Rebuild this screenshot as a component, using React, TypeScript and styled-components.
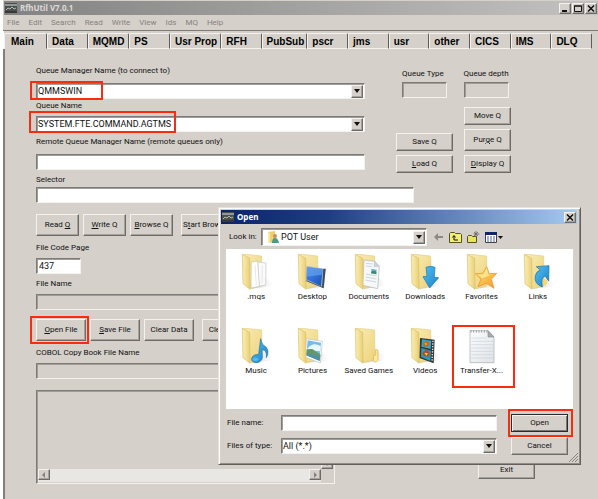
import React from "react";
import styled, { createGlobalStyle, css } from "styled-components";

const face = "#d5d0ca";
const shade = "#7c7b78";
const light = "#f4f2ee";
const red = "#fb2b0e";

const GlobalStyle = createGlobalStyle`
  * { box-sizing: border-box; }
  body {
    margin: 0;
    background: #fff;
    color: #111;
    font-family: Roboto, Arial, sans-serif;
    font-size: 8px;
    line-height: 14px;
  }
  button, input, select, textarea {
    margin: 0;
    padding: 0;
    border: 0;
    border-radius: 0;
    outline: 0;
    color: inherit;
    font: inherit;
  }
`;

const raised = css`
  border: 1px solid;
  border-color: ${light} #6d6b68 #6d6b68 ${light};
  box-shadow: inset -1px -1px 0 #a5a19c;
`;

const sunken = css`
  border: 1px solid;
  border-color: ${shade} ${light} ${light} ${shade};
  box-shadow: inset 1px 1px 0 #a09d99;
`;

const Desktop = styled.div`
  position: relative;
  min-height: 100vh;
  padding-left: 3px;
  display: flex;
  overflow: hidden;
`;

const MainWindow = styled.main`
  flex: 1;
  min-width: 0;
  display: flex;
  flex-direction: column;
  background: ${face};
`;

const TitleBar = styled.header<{ $active?: boolean }>`
  display: flex;
  align-items: center;
  gap: 3px;
  height: 14px;
  flex: none;
  padding: 0 1px;
  color: ${(p) => (p.$active ? "#fff" : "#dcdad6")};
  background: ${(p) =>
    p.$active
      ? "linear-gradient(90deg, #0a246a, #1d3f82 30%, #a6caf0)"
      : "linear-gradient(90deg, #828282, #c3c2c0)"};
  margin: ${(p) => (p.$active ? "0" : "1px 0 0 1px")};
`;

const Title = styled.h1`
  margin: 0;
  flex: 1;
  font: bold 8px/14px "Noto Sans", sans-serif;
`;

const WindowControls = styled.div`
  display: flex;
  gap: 1px;
`;

const ControlButton = styled.button`
  ${raised}
  width: 12px;
  height: 11px;
  display: grid;
  place-items: center;
  background: ${face};
  color: #111;
`;

const MenuBar = styled.nav`
  display: flex;
  gap: 9px;
  height: 16px;
  padding-left: 4px;
  border-bottom: 1px solid ${shade};
`;

const MenuItem = styled.button`
  background: none;
  color: #85827e;
`;

const TabBar = styled.div`
  display: flex;
  height: 18px;
  padding: 2px 6px 0 0;
  border-left: 1px solid #fff;
`;

const Tab = styled.button<{ $weight: number; $selected: boolean }>`
  flex: ${(p) => p.$weight} 1 0;
  min-width: 0;
  padding-left: ${(p) => (p.$selected ? "6px" : "4px")};
  text-align: left;
  white-space: nowrap;
  color: #000;
  background: ${face};
  font: bold 10px/15px "Liberation Sans", Arial, sans-serif;
  border-top: 1px solid ${light};
  border-right: 1px solid #5f5d5a;
  border-left: 1px solid ${light};
  border-bottom: 1px solid ${(p) => (p.$selected ? face : light)};
  border-radius: 2px 2px 0 0;
`;

const Page = styled.section`
  flex: 1;
  padding: 15px 87px 15px 31px;
  border-left: 2px solid #82807d;
`;

const TopRow = styled.div`
  display: flex;
  gap: 31px;
`;

const Fields = styled.div`
  flex: 1;
  min-width: 0;
  display: flex;
  flex-direction: column;
  padding-bottom: 3px;
`;

const Field = styled.div<{ $gap?: number; $top?: number; $width?: string }>`
  position: relative;
  display: flex;
  flex-direction: column;
  gap: ${(p) => p.$gap ?? 3}px;
  margin-top: ${(p) => p.$top ?? 0}px;
  width: ${(p) => p.$width ?? "auto"};
  white-space: nowrap;
`;

const TextBox = styled.input`
  ${sunken}
  width: 100%;
  height: 16px;
  padding: 0 2px;
  background: #fff;
  font-size: 9px;
  &:disabled { background: ${face}; }
`;

const ComboFrame = styled.div`
  ${sunken}
  position: relative;
  display: flex;
  align-items: center;
  height: 16px;
  padding: 1px;
  background: #fff;
`;

const ComboSelect = styled.select`
  appearance: none;
  flex: 1;
  min-width: 0;
  height: 12px;
  font-size: 9px;
  line-height: 12px;
  background: transparent;
`;

const ComboArrow = styled.span`
  ${raised}
  width: 12px;
  height: 13px;
  display: grid;
  place-items: center;
  background: ${face};
  pointer-events: none;
`;

const Highlight = styled.span<{ $inset: string; $width?: string }>`
  position: absolute;
  inset: ${(p) => p.$inset};
  width: ${(p) => p.$width ?? "auto"};
  border: 2px solid ${red};
  pointer-events: none;
`;

const QueueActions = styled.div`
  display: flex;
  gap: 8px;
  padding-top: 3px;
`;

const ActionColumn = styled.div`
  display: flex;
  flex-direction: column;
  justify-content: space-between;
  width: 57px;
`;

const StatusColumn = styled.div`
  display: flex;
  flex-direction: column;
  justify-content: space-between;
  width: 50px;
`;

const Status = styled.div`
  align-self: center;
  width: 45px;
  display: flex;
  flex-direction: column;
  gap: 1px;
  white-space: nowrap;
`;

const Stack = styled.div`
  display: flex;
  flex-direction: column;
  gap: 4px;
`;

const Button = styled.button<{ $width?: string; $height?: number; $default?: boolean }>`
  ${raised}
  flex: none;
  width: ${(p) => p.$width ?? "100%"};
  height: ${(p) => p.$height ?? 18}px;
  background: ${face};
  white-space: nowrap;
  text-align: center;
  u { text-underline-offset: 1px; }
  ${(p) =>
    p.$default &&
    css`
      border-color: #2b2b2b;
      box-shadow: inset 1px 1px 0 ${light}, inset -1px -1px 0 #777;
    `}
`;

const StatusButtons = styled(Stack)`
  padding-left: 3px;
`;

const ButtonRow = styled.div<{ $top: number }>`
  display: flex;
  gap: 4px;
  margin-top: ${(p) => p.$top}px;
`;

const ButtonSlot = styled.span<{ $indent?: number }>`
  position: relative;
  display: flex;
  margin-left: ${(p) => p.$indent ?? 0}px;
`;

const BottomRow = styled.div`
  display: flex;
  align-items: flex-end;
  justify-content: space-between;
  margin: 11px -24px 0 0;
`;

const CopyBook = styled.div`
  ${sunken}
  display: grid;
  grid-template: 1fr 13px / 1fr 12px;
  width: 299px;
  height: 94px;
  padding: 1px;
`;

const CopyBookText = styled.textarea`
  width: 100%;
  height: 100%;
  resize: none;
  background: transparent;
`;

const Scroll = styled.div<{ $vertical?: boolean }>`
  display: flex;
  flex-direction: ${(p) => (p.$vertical ? "column" : "row")};
  justify-content: space-between;
  background: #e9e7e3;
`;

const ExitSlot = styled.div`
  width: 57px;
  margin-bottom: 5px;
`;

const Dialog = styled.section`
  position: absolute;
  left: 218px;
  top: 207px;
  width: 363px;
  padding: 2px 3px 9px 2px;
  background: ${face};
  border: 1px solid;
  border-color: #e6e2dd #62605d #62605d #e6e2dd;
  box-shadow: inset 1px 1px 0 #fff, inset -1px -1px 0 #908d89;
  white-space: nowrap;
`;

const LookIn = styled.div`
  display: grid;
  grid-template-columns: 32px 166px auto;
  align-items: center;
  padding: 4px 8px 3px;
`;

const LocationFrame = styled(ComboFrame)`
  height: 18px;
  padding-left: 5px;
  gap: 2px;
`;

const ToolBar = styled.div`
  display: flex;
  align-items: center;
  gap: 5px;
  padding-left: 6px;
`;

const ToolButton = styled.button`
  display: flex;
  background: none;
`;

const FileList = styled.div`
  display: grid;
  grid-template-columns: repeat(6, 1fr);
  grid-auto-rows: 74px;
  height: 160px;
  margin: 0 4px 0 5px;
  padding: 5px 7px 0 2px;
  background: #fff;
`;

const FileItem = styled.button`
  position: relative;
  display: flex;
  flex-direction: column;
  align-items: center;
  background: none;
  white-space: nowrap;
`;

const DialogFooter = styled.div`
  display: grid;
  grid-template-columns: 54px 1fr 57px;
  align-items: center;
  row-gap: 5px;
  padding: 5px 9px 0 6px;
`;

const FooterControl = styled.div`
  margin-right: 14px;
`;

const Grip = styled.svg`
  position: absolute;
  right: 2px;
  bottom: 2px;
`;

function Arrow({ dir = "down", muted = false }: { dir?: "down" | "left" | "right"; muted?: boolean }) {
  const paths = { down: "M0 1h6L3 5z", left: "M4 0v6L1 3z", right: "M2 0v6l3-3z" };
  return (
    <svg width="6" height="6" viewBox="0 0 6 6" aria-hidden="true">
      <path d={paths[dir]} fill={muted ? "#858380" : "#111"} />
    </svg>
  );
}

function AppIcon() {
  return (
    <svg width="12" height="10" viewBox="0 0 12 10" aria-hidden="true">
      <rect width="12" height="10" fill="#4b504f" />
      <path d="M0 1h12v2H0z" fill="#8e9894" />
      <path d="M1 7l2-2 2 1 2-2 2 2 2-1" fill="none" stroke="#b4b8b3" />
      <path d="M0 9h12" stroke="#222" />
    </svg>
  );
}

function CloseGlyph() {
  return (
    <svg width="8" height="7" viewBox="0 0 8 7" aria-hidden="true">
      <path d="M1 0.5l6 6M7 0.5l-6 6" stroke="#111" strokeWidth="1.5" />
    </svg>
  );
}

function Combo({ id, value }: { id: string; value: string }) {
  return (
    <ComboFrame>
      <ComboSelect id={id}>
        <option>{value}</option>
      </ComboSelect>
      <ComboArrow><Arrow /></ComboArrow>
    </ComboFrame>
  );
}

type Kind =
  | "papers" | "desktop" | "document" | "download" | "star" | "link"
  | "music" | "picture" | "games" | "video" | "text";

const overlays: Record<Exclude<Kind, "text">, React.ReactNode> = {
  papers: (
    <g stroke="#c4c4c4" strokeWidth="2">
      <path d="M50 24l25 3-1 66-20 4z" fill="#fafafa" />
      <path d="M31 24l19-2 5 75-25 5z" fill="#fff" />
      <path d="M42 32l4 62M64 34l-1 54" stroke="#ddd" />
    </g>
  ),
  desktop: (
    <>
      <path d="M28 36l58 8-6 59-56-24z" fill="#aab8c5" />
      <path d="M31 39l46 7-5 50-44-20z" fill="url(#screen)" />
      <path d="M31 39l46 7-2 16-46 6z" fill="#6ea6f4" opacity=".6" />
      <path d="M79 45l7-1-6 59-5-3z" fill="#3e4a55" />
      <path d="M25 79l54 22" stroke="#4c5c68" strokeWidth="3" />
    </>
  ),
  document: (
    <>
      <path d="M30 18l32 4 14 15-5 67-45-10z" fill="#f6f8fa" stroke="#aeb6bb" strokeWidth="2" />
      <path d="M62 22l-2 16 16-1z" fill="#cdd8de" stroke="#9aa5ab" />
      <path d="M36 28l20 2M36 36l18 2M36 60l32 6M35 69l32 6M34 78l32 6" stroke="#b9c3ca" strokeWidth="2" />
      <path d="M52 44l16 3-1 14-16-3z" fill="#76b4da" />
      <path d="M52 54q8-8 15 0l0 7-16-3z" fill="#3e8b6d" />
    </>
  ),
  download: (
    <path d="M48 40q13-6 27 0l-2 30 13 1-27 31-20-34 12-1z" fill="url(#blue)" stroke="#1478b5" strokeWidth="2" />
  ),
  star: (
    <>
      <path d="M62 38l8 21 22-1-16 18 8 27-23-15-25 10 9-23-17-16 22-1z" fill="url(#gold)" stroke="#e78e21" strokeWidth="2" />
      <path d="M62 43l6 20 14-2-34 12-12-11 16-1z" fill="#fff1a4" opacity=".7" />
    </>
  ),
  link: (
    <>
      <path d="M40 38l38-3-1 46-11-15q-13 5-8 33-26-10-21-34 3-13 15-17z" fill="url(#blue)" stroke="#126ca5" strokeWidth="2" />
      <path d="M64 76q9-2 9 7t-10 13z" fill="#f6d76c" />
    </>
  ),
  music: (
    <>
      <path d="M59 32q3 19 16 25 11 14 1 32 3-23-13-24l1 24q-4 15-19 15-15-2-13-13 4-13 21-11z" fill="url(#blue)" stroke="#1670ad" strokeWidth="2" />
      <ellipse cx="44" cy="94" rx="9" ry="5" fill="#7bc9f2" opacity=".6" />
    </>
  ),
  picture: (
    <>
      <path d="M28 32l48 8-6 65-47-18z" fill="#fff" stroke="#b6c1c8" strokeWidth="2" />
      <path d="M32 37l40 7-5 54-39-16z" fill="#74bde9" />
      <path d="M32 61q16-20 39-7l-1 16-41-4z" fill="#e9f7fb" />
      <path d="M29 64l17-1 25 17-3 18-40-16z" fill="#62986f" />
      <path d="M29 78l39 9-1 11-39-16z" fill="#4c91b5" />
    </>
  ),
  games: (
    <path d="M65 64l7 3v30l-6 6-8-4 1-16 6-2z" fill="#ffe89b" stroke="#dbb34a" strokeWidth="2" />
  ),
  video: (
    <>
      <path d="M30 30l44 5-3 71-43-16z" fill="#343434" />
      <path d="M36 34l28 4-2 25-28-7z" fill="#2baad1" />
      <path d="M34 60l29 8-2 31-28-12z" fill="#249bc0" />
      <path d="M38 46l10-8 11 6-3 11-14 1z" fill="#c26a23" />
      <path d="M37 76l11-12 11 9-3 14-15-3z" fill="#b34c27" />
      <path d="M43 45l8 2-3 5zM43 74l11 2-5 8z" fill="#f5ca35" />
      <path d="M69 38l-3 64" stroke="#eee" strokeWidth="4" strokeDasharray="4 4" />
    </>
  ),
};

const PaintDefs = styled.svg`
  position: absolute;
`;

function IconPaints() {
  return (
    <PaintDefs width="0" height="0" aria-hidden="true">
      <defs>
        <linearGradient id="back" x1="0" x2="1" y1="0" y2="1">
          <stop stopColor="#f9edb6" />
          <stop offset="1" stopColor="#ecd27a" />
        </linearGradient>
        <linearGradient id="flap" x1="0" x2="1">
          <stop stopColor="#fbefb8" />
          <stop offset="1" stopColor="#e9cf76" />
        </linearGradient>
        <linearGradient id="screen" x1="0" x2="1" y1="0" y2="1">
          <stop stopColor="#4a8ded" />
          <stop offset="1" stopColor="#1752ba" />
        </linearGradient>
        <linearGradient id="blue" x1="0" x2="1" y1="0" y2="1">
          <stop stopColor="#56bff0" />
          <stop offset="1" stopColor="#1683cb" />
        </linearGradient>
        <linearGradient id="gold" x1="0" x2="1" y1="0" y2="1">
          <stop stopColor="#ffe376" />
          <stop offset="1" stopColor="#f59b26" />
        </linearGradient>
        <linearGradient id="shadow" x1="0" x2="1">
          <stop stopColor="#999" stopOpacity=".6" />
          <stop offset="1" stopColor="#ccc" stopOpacity="0" />
        </linearGradient>
        <linearGradient id="sheet" x1="0" x2="1" y1="0" y2="1">
          <stop stopColor="#fdfdfd" />
          <stop offset="1" stopColor="#dfe3e7" />
        </linearGradient>
      </defs>
    </PaintDefs>
  );
}

function FileIcon({ kind }: { kind: Kind }) {
  if (kind === "text") {
    return (
      <svg width="34" height="36" viewBox="-3 0 102 108" aria-hidden="true">
        <path d="M15 8h54l18 19v77H15z" fill="url(#sheet)" stroke="#a6a9ac" strokeWidth="2" />
        <path d="M69 8v19h18z" fill="#a7acb1" stroke="#898d91" strokeWidth="2" />
        <path d="M19 30h46M19 40h65M19 50h65M19 60h65M19 70h65M19 80h65M19 90h65" stroke="#c7d2dc" strokeWidth="2" />
        <path d="M18 6v8M26 6v8M34 6v8M42 6v8M50 6v8M58 6v8M66 6v8" stroke="#9da0a3" strokeWidth="3" />
      </svg>
    );
  }
  return (
    <svg width="34" height="36" viewBox="-6 0 102 108" aria-hidden="true">
      <path d="M58 62l38 26-8 10-58 6z" fill="url(#shadow)" />
      <path d="M5 0l57 6 1 89-35 9z" fill="url(#back)" stroke="#e4cf81" strokeWidth="2" />
      {overlays[kind]}
      <path d="M4 1l22 12 1 93L6 89z" fill="url(#flap)" stroke="#dbbf62" strokeWidth="2" />
    </svg>
  );
}

const tabs: [string, number][] = [
  ["Main", 82], ["Data", 81], ["MQMD", 83], ["PS", 81], ["Usr Prop", 106], ["RFH", 80],
  ["PubSub", 93], ["pscr", 81], ["jms", 81], ["usr", 81], ["other", 81], ["CICS", 81], ["IMS", 81], ["DLQ", 81],
];

const files: [string, Kind][] = [
  [".mqs", "papers"], ["Desktop", "desktop"], ["Documents", "document"], ["Downloads", "download"],
  ["Favorites", "star"], ["Links", "link"], ["Music", "music"], ["Pictures", "picture"],
  ["Saved Games", "games"], ["Videos", "video"], ["Transfer-X...", "text"],
];

const menus = ["File", "Edit", "Search", "Read", "Write", "View", "Ids", "MQ", "Help"];

function OpenDialog() {
  return (
    <Dialog role="dialog" aria-label="Open">
      <TitleBar $active>
        <AppIcon />
        <Title as="h2">Open</Title>
        <ControlButton aria-label="Close"><CloseGlyph /></ControlButton>
      </TitleBar>
      <LookIn>
        <label htmlFor="look">Look in:</label>
        <LocationFrame>
          <svg width="12" height="13" viewBox="0 0 12 13" aria-hidden="true">
            <path d="M1 1l7-1v11l-5 1-2-1z" fill="#edcf6e" />
            <path d="M1 1l2 1v10l-2-1z" fill="#fae9a4" />
            <circle cx="8" cy="5" r="2" fill="#c88d62" />
            <path d="M5 12q0-5 3-5t4 5z" fill="#439d8a" />
          </svg>
          <ComboSelect id="look"><option>POT User</option></ComboSelect>
          <ComboArrow><Arrow /></ComboArrow>
        </LocationFrame>
        <ToolBar>
          <ToolButton aria-label="Back">
            <svg width="11" height="10" viewBox="0 0 11 10"><path d="M1 5l4-4v3h5v2H5v3z" fill="#8b8985" /></svg>
          </ToolButton>
          <ToolButton aria-label="Up one level">
            <svg width="13" height="11" viewBox="0 0 13 11">
              <path d="M.5 10.500V1.500l1-1h4l1 1h5l1 1v8z" fill="#f3ef72" stroke="#55551e" />
              <path d="M5 4v4h4M3.500 5.500L5 3.500l1.500 2" fill="none" stroke="#111" />
            </svg>
          </ToolButton>
          <ToolButton aria-label="New folder">
            <svg width="13" height="12" viewBox="0 0 13 12">
              <path d="M.5 11.500V5.500l1-1h3l1 1h4v6z" fill="#e7e364" stroke="#55551e" />
              <path d="M9 0v6M6.500 3h6M7 1l4 4M11 1L7 5" stroke="#666" strokeWidth=".8" />
            </svg>
          </ToolButton>
          <ToolButton aria-label="View menu">
            <svg width="18" height="11" viewBox="0 0 18 11">
              <path d="M.5.5h11v10H.5z" fill="#fff" stroke="#444" />
              <path d="M0 0h12v3H0z" fill="#102766" />
              <path d="M2 5h2M5 5h2M8 5h2M2 7h2M5 7h2M8 7h2M2 9h2M5 9h2M8 9h2" stroke="#4961a0" />
              <path d="M13 4h5l-2.500 3z" fill="#111" />
            </svg>
          </ToolButton>
        </ToolBar>
      </LookIn>
      <FileList>
        {files.map(([name, kind]) => (
          <FileItem key={name}>
            <FileIcon kind={kind} />
            {name}
            {kind === "text" && <Highlight $inset="-3px -5px 14px -1px" />}
          </FileItem>
        ))}
      </FileList>
      <DialogFooter>
        <label htmlFor="filename">File name:</label>
        <FooterControl><TextBox id="filename" autoFocus /></FooterControl>
        <ButtonSlot>
          <Button $default>Open</Button>
          <Highlight $inset="-5px -5px -5px -3px" />
        </ButtonSlot>
        <label htmlFor="filetype">Files of type:</label>
        <FooterControl><Combo id="filetype" value="All (*.*)" /></FooterControl>
        <Button>Cancel</Button>
      </DialogFooter>
      <Grip width="9" height="9" viewBox="0 0 9 9" aria-hidden="true">
        <path d="M0 9l9-9M3 9l6-6M6 9l3-3" stroke="#858380" />
      </Grip>
    </Dialog>
  );
}

export default function App() {
  return (
    <Desktop>
      <GlobalStyle />
      <MainWindow>
        <TitleBar>
          <AppIcon />
          <Title>RfhUtil V7.0.1</Title>
          <WindowControls>
            <ControlButton aria-label="Minimize">
              <svg width="8" height="7" viewBox="0 0 8 7"><path d="M1 6h5" stroke="#111" strokeWidth="2" /></svg>
            </ControlButton>
            <ControlButton aria-label="Maximize">
              <svg width="8" height="7" viewBox="0 0 8 7"><path d="M.5 1h7v5.500h-7zM0 1h8" fill="none" stroke="#111" /></svg>
            </ControlButton>
            <ControlButton aria-label="Close window"><CloseGlyph /></ControlButton>
          </WindowControls>
        </TitleBar>
        <MenuBar>
          {menus.map((m) => <MenuItem key={m}>{m}</MenuItem>)}
        </MenuBar>
        <TabBar role="tablist">
          {tabs.map(([name, weight], i) => (
            <Tab key={name} role="tab" aria-selected={i === 0} $selected={i === 0} $weight={weight}>{name}</Tab>
          ))}
        </TabBar>
        <Page>
          <TopRow>
            <Fields>
              <Field $gap={5}>
                <label htmlFor="qm">Queue Manager Name (to connect to)</label>
                <Combo id="qm" value="QMMSWIN" />
                <Highlight $inset="17px auto -1px -6px" $width="73px" />
              </Field>
              <Field>
                <label htmlFor="queue">Queue Name</label>
                <Combo id="queue" value="SYSTEM.FTE.COMMAND.AGTMS" />
                <Highlight $inset="12px auto -1px -7px" $width="147px" />
              </Field>
              <Field $top={3} $gap={5}>
                <label htmlFor="remote">Remote Queue Manager Name (remote queues only)</label>
                <TextBox id="remote" />
              </Field>
            </Fields>
            <QueueActions>
              <ActionColumn>
                <Status>
                  <label htmlFor="qtype">Queue Type</label>
                  <TextBox id="qtype" disabled />
                </Status>
                <Stack>
                  <Button>Save Q</Button>
                  <Button><u>L</u>oad Q</Button>
                </Stack>
              </ActionColumn>
              <StatusColumn>
                <Status>
                  <label htmlFor="qdepth">Queue depth</label>
                  <TextBox id="qdepth" disabled />
                </Status>
                <StatusButtons>
                  <Button>Move Q</Button>
                  <Button $height={22}>Pur<u>g</u>e Q</Button>
                  <Button><u>D</u>isplay Q</Button>
                </StatusButtons>
              </StatusColumn>
            </QueueActions>
          </TopRow>
          <Field $gap={0} $width="378px">
            <label htmlFor="selector">Selector</label>
            <TextBox id="selector" />
          </Field>
          <ButtonRow $top={11}>
            <Button $width="43px" $height={22}>Read <u>Q</u></Button>
            <Button $width="43px" $height={22}><u>W</u>rite Q</Button>
            <Button $width="43px" $height={22}><u>B</u>rowse Q</Button>
            <ButtonSlot $indent={4}><Button $width="50px" $height={22}>S<u>t</u>art Browse</Button></ButtonSlot>
          </ButtonRow>
          <Field $top={5} $width="45px">
            <label htmlFor="codepage">File Code Page</label>
            <TextBox id="codepage" defaultValue="437" />
          </Field>
          <Field $top={3}>
            <label htmlFor="file">File Name</label>
            <TextBox id="file" disabled />
          </Field>
          <ButtonRow $top={9}>
            <ButtonSlot>
              <Button $width="50px" $height={22}><u>O</u>pen File</Button>
              <Highlight $inset="-3px -3px -3px -6px" />
            </ButtonSlot>
            <Button $width="50px" $height={22}><u>S</u>ave File</Button>
            <Button $width="50px" $height={22}>Clear Data</Button>
            <ButtonSlot $indent={4}><Button $width="43px" $height={22}>Clear All</Button></ButtonSlot>
          </ButtonRow>
          <Field $top={5}>
            <label htmlFor="copybook">COBOL Copy Book File Name</label>
            <TextBox id="copybook" disabled />
          </Field>
          <BottomRow>
            <CopyBook>
              <CopyBookText aria-label="Copy book" readOnly />
              <Scroll $vertical>
                <ControlButton aria-label="Scroll up"><Arrow muted /></ControlButton>
                <ControlButton aria-label="Scroll down"><Arrow muted /></ControlButton>
              </Scroll>
              <Scroll>
                <ControlButton aria-label="Scroll left"><Arrow dir="left" muted /></ControlButton>
                <ControlButton aria-label="Scroll right"><Arrow dir="right" muted /></ControlButton>
              </Scroll>
            </CopyBook>
            <ExitSlot><Button>Exit</Button></ExitSlot>
          </BottomRow>
        </Page>
      </MainWindow>
      <IconPaints />
      <OpenDialog />
    </Desktop>
  );
}
